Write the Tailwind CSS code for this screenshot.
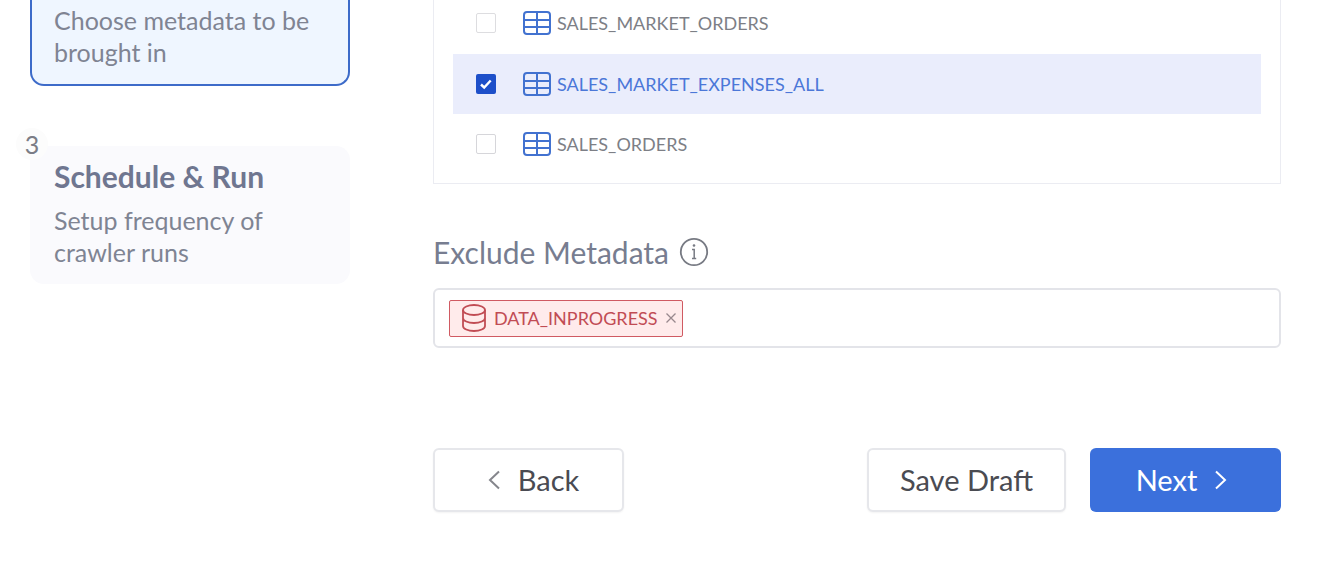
<!DOCTYPE html>
<html lang="en">
<head>
<meta charset="utf-8">
<meta name="viewport" content="width=device-width, initial-scale=1">
<title>Crawler setup</title>
<script src="https://cdn.jsdelivr.net/npm/@tailwindcss/browser@4"></script>
</head>
<body class="min-h-screen bg-white font-['Lato',sans-serif]">
<svg class="hidden" aria-hidden="true">
  <symbol id="table" viewBox="0 0 28 24">
    <path d="M4 1h20a3 3 0 0 1 3 3v16a3 3 0 0 1-3 3H4a3 3 0 0 1-3-3V4a3 3 0 0 1 3-3ZM14 1v22M1 9h26M1 16h26" fill="none" stroke="currentColor" stroke-width="2"/>
  </symbol>
</svg>
<div class="flex gap-[83px] pr-9 pl-[30px]">
  <aside class="w-80 shrink-0 text-[25px] leading-8 text-[#7f8493]">
    <section class="rounded-b-[14px] border-2 border-t-0 border-[#3d6bc9] bg-[#eff6ff] px-[22px] pt-1 pb-4">
      <p>Choose metadata to be brought in</p>
    </section>
    <section class="relative mt-[60px] rounded-[14px] bg-[#fafafd] px-6 pt-2.5 pb-4">
      <span class="absolute -top-[18px] -left-3.5 flex size-8 items-center justify-center rounded-full bg-[#fcfcfc] text-[#7b7d86]">3</span>
      <h2 class="mb-2 text-3xl/10 font-bold text-[#6f7690]">Schedule &amp; Run</h2>
      <p>Setup frequency of<br>crawler runs</p>
    </section>
  </aside>
  <main class="min-w-0 flex-1">
    <div class="border border-t-0 border-[#ebecf2] px-[19px] pb-[9px] text-lg text-[#7d7f86]">
      <label class="flex h-[54px] items-center pb-2 pl-[23px]">
        <input type="checkbox" class="mr-[27px] size-5 appearance-none rounded-[2px] border border-[#dddde0] bg-white">
        <svg class="mr-1.5 h-6 w-7 text-[#4272d0]" aria-hidden="true"><use href="#table"/></svg>
        <span>SALES_MARKET_ORDERS</span>
      </label>
      <label class="flex h-[60px] items-center bg-[#eaedfc] pl-[23px] text-[#4b77d8]">
        <span class="mr-[27px] grid size-5">
          <input type="checkbox" checked class="col-start-1 row-start-1 size-5 appearance-none rounded-[2px] bg-[#1d4fc9]">
          <svg class="pointer-events-none col-start-1 row-start-1 size-5" viewBox="0 0 20 20" fill="none" stroke="#fff" stroke-width="2.4" aria-hidden="true"><path d="m5 10.5 3.2 3 6.5-7"/></svg>
        </span>
        <svg class="mr-1.5 h-6 w-7 text-[#4272d0]" aria-hidden="true"><use href="#table"/></svg>
        <span>SALES_MARKET_EXPENSES_ALL</span>
      </label>
      <label class="flex h-[60px] items-center pl-[23px]">
        <input type="checkbox" class="mr-[27px] size-5 appearance-none rounded-[2px] border border-[#d6d6da] bg-white">
        <svg class="mr-1.5 h-6 w-7 text-[#4272d0]" aria-hidden="true"><use href="#table"/></svg>
        <span>SALES_ORDERS</span>
      </label>
    </div>
    <div class="mt-12 flex items-center gap-2.5">
      <h3 class="text-3xl/10 text-[#777d90]">Exclude Metadata</h3>
      <button type="button" aria-label="About excluded metadata" class="text-[#777a83]">
        <svg class="size-[30px]" viewBox="0 0 30 30" fill="none" stroke="currentColor" stroke-width="1.8"><circle cx="15" cy="15" r="13.2"/><path d="M13 12.500H15.200V21.500M13 21.500H17.200" stroke-width="1.5"/><circle cx="15" cy="8.5" r="1.3" fill="currentColor" stroke="none"/></svg>
      </button>
    </div>
    <div class="mt-4 flex h-[60px] items-center rounded-md border-2 border-[#e3e4e9] px-3.5">
      <span class="flex h-[37px] items-center rounded-[2px] border border-[#d05a62] bg-[#ffebeb] pr-1.5 pl-3 text-lg text-[#c14c54]">
        <svg class="mr-2 h-7 w-6" viewBox="0 0 24 28" fill="none" stroke="currentColor" stroke-width="1.8" aria-hidden="true"><ellipse cx="12" cy="6" rx="11" ry="5"/><path d="M1 6v16c0 2.800 4.900 5 11 5s11-2.200 11-5V6M1 14c0 2.800 4.900 5 11 5s11-2.200 11-5"/></svg>
        DATA_INPROGRESS
        <button type="button" aria-label="Remove DATA_INPROGRESS" class="ml-2 text-[#98888d]"><svg class="size-2.5" viewBox="0 0 10 10" stroke="currentColor" stroke-width="1.3"><path d="m.5.5 9 9m0-9-9 9"/></svg></button>
      </span>
      <input type="text" aria-label="Exclude metadata" class="min-w-0 flex-1 outline-none">
    </div>
    <div class="mt-[100px] flex gap-6 text-[29px] text-[#4a4b52]">
      <button type="button" class="mr-auto flex h-16 w-[191px] items-center justify-center gap-[18px] rounded-md border-2 border-[#e6e7eb] bg-white pl-2.5 shadow-xs">
        <svg class="h-5 w-3 text-[#85868c]" viewBox="0 0 12 20" fill="none" stroke="currentColor" stroke-width="2" aria-hidden="true"><path d="m11 1.500-9 8.500 9 8.500"/></svg>Back
      </button>
      <button type="button" class="flex h-16 w-[199px] items-center justify-center rounded-md border-2 border-[#e6e7eb] bg-white shadow-xs">Save Draft</button>
      <button type="button" class="flex h-16 w-[191px] items-center justify-center gap-[18px] rounded-md bg-[#3b70dc] pr-2 text-white">Next<svg class="h-5 w-3" viewBox="0 0 12 20" fill="none" stroke="currentColor" stroke-width="2" aria-hidden="true"><path d="m1 1.500 9 8.500-9 8.500"/></svg></button>
    </div>
  </main>
</div>
</body>
</html>
